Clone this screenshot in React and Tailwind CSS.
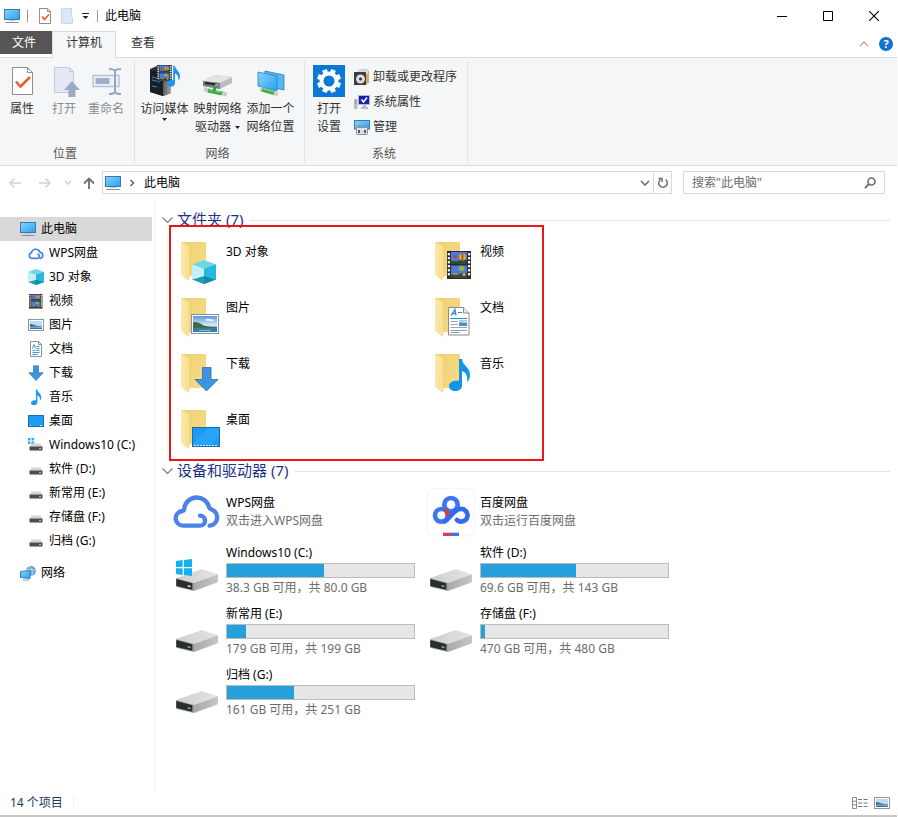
import React from 'react';

/* ---------- small shared icons (16 x 16) ---------- */

function Icon16({ children, className = 'size-4' }) {
  return (
    <svg viewBox="0 0 16 16" className={`shrink-0 ${className}`} aria-hidden="true">
      {children}
    </svg>
  );
}

function Defs() {
  return (
    <svg className="size-0" aria-hidden="true">
      <defs>
        <linearGradient id="screen" x1="0" y1="0" x2="1" y2="1">
          <stop offset="0" stopColor="#86d4fb" />
          <stop offset="1" stopColor="#2b9ff2" />
        </linearGradient>
        <linearGradient id="folderBack" x1="0" y1="0" x2="1" y2="1">
          <stop offset="0" stopColor="#f0d072" />
          <stop offset="1" stopColor="#f6dc88" />
        </linearGradient>
        <linearGradient id="folderFront" x1="0" y1="0" x2="1" y2="0">
          <stop offset="0" stopColor="#fbe9ae" />
          <stop offset="1" stopColor="#f9dd8b" />
        </linearGradient>
        <linearGradient id="driveTop" x1="0" y1="0" x2="1" y2="0">
          <stop offset="0" stopColor="#cfcfd1" />
          <stop offset="1" stopColor="#e4e4e6" />
        </linearGradient>
        <linearGradient id="driveSide" x1="0" y1="0" x2="1" y2="0">
          <stop offset="0" stopColor="#a9a9ab" />
          <stop offset="1" stopColor="#c6c6c8" />
        </linearGradient>
        <linearGradient id="sky" x1="0" y1="0" x2="0" y2="1">
          <stop offset="0" stopColor="#5c94e0" />
          <stop offset="0.55" stopColor="#d3e8f6" />
          <stop offset="1" stopColor="#6fa3c4" />
        </linearGradient>
        <linearGradient id="tower" x1="0" y1="0" x2="1" y2="0">
          <stop offset="0" stopColor="#5b5b5e" />
          <stop offset="1" stopColor="#a5a5a8" />
        </linearGradient>
      </defs>
    </svg>
  );
}

const Monitor = ({ className }) => (
  <Icon16 className={className}>
    <rect x="0.5" y="1.5" width="15" height="10" fill="url(#screen)" stroke="#3a7ba8" />
    <path d="M5 12.5h6" stroke="#b9c6cf" />
    <path d="M1.5 14.5h13" stroke="#7f8f9b" />
  </Icon16>
);

const CloudSmall = () => (
  <Icon16>
    <path
      d="M10 9.2a2.2 2.2 0 1 1-1.6 4.1H3.8a2.8 2.8 0 0 1-.4-5.5 4.5 4.5 0 0 1 8.7-.4 3 3 0 0 1 .4 5.9"
      fill="none"
      stroke="#4a7fe0"
      strokeWidth="1.7"
      strokeLinecap="round"
    />
  </Icon16>
);

function CubeShape() {
  return (
    <>
      <path d="M12 0 24 4.5 12 9 0 4.5Z" fill="#6fd6e6" />
      <path d="M0 4.5 12 9V24L0 19.5Z" fill="#b9eef5" />
      <path d="M24 4.5 12 9V24l12-4.5Z" fill="#19a9d0" />
      <path d="M0 19.5 12 16l12 3.5L12 24Z" fill="#0c8aa6" opacity="0.85" />
      <path d="M12 9v7L0 19.5V4.5Z" fill="#c3f1f6" opacity="0.9" />
      <path d="M12 9v7l12 3.5v-15Z" fill="#27b9dc" />
    </>
  );
}

const CubeSmall = () => (
  <Icon16>
    <g transform="scale(0.667)">
      <CubeShape />
    </g>
  </Icon16>
);

/* Film strip drawn on a 24 x 28 grid */
function FilmShape() {
  const holes = [2, 6, 10, 14, 18, 22];
  return (
    <>
      <rect width="24" height="28" fill="#2b2b2b" />
      {holes.map((y) => (
        <g key={y} fill="#f2f2f2">
          <rect x="0.8" y={y} width="2.2" height="2.4" />
          <rect x="21" y={y} width="2.2" height="2.4" />
        </g>
      ))}
      <rect x="4" y="1" width="16" height="12" fill="#4a7be0" />
      <rect x="4" y="14.5" width="16" height="12.5" fill="#4a7be0" />
      <path d="M4 10.500c3-2 5 1 8-1s5 1 8-1v4.500H4Z" fill="#2b4f2f" />
      <path d="M4 24c3-2 6 1 9-1s5 0 7-1v5H4Z" fill="#3b4a2a" />
      <circle cx="15.500" cy="6" r="3.400" fill="#e2ab2c" />
      <path d="M15.500 2.600v6.800" stroke="#b4372f" strokeWidth="1.400" />
      <circle cx="8" cy="6" r="1.800" fill="#c83c34" />
      <circle cx="14.500" cy="17.500" r="2.800" fill="#8bb83c" />
      <path d="M6 23h4" stroke="#e9842b" strokeWidth="1.600" />
      <circle cx="17" cy="23.500" r="1.500" fill="#e9b02b" />
    </>
  );
}

const FilmSmall = () => (
  <Icon16>
    <g transform="translate(1 1) scale(0.56 0.52)">
      <FilmShape />
    </g>
  </Icon16>
);

/* Landscape photo drawn on a 28 x 20 grid */
function PhotoShape() {
  return (
    <>
      <rect x="0.5" y="0.5" width="27" height="19" fill="#fff" stroke="#7e93a6" />
      <rect x="2" y="2" width="24" height="16" fill="url(#sky)" />
      <path d="M2 8.500c3-1 6 0 9 2s6 2 15 2.500v1H2Z" fill="#3f6b4b" />
      <path d="M2 14h24v4H2Z" fill="#3c7ba3" />
      <path d="M8 16.500h12" stroke="#9fc7dc" strokeWidth="0.800" />
      <path d="M14 6c2-2 4-1 5-1s3 0 4 1-4 2-9 0Z" fill="#fff" opacity="0.800" />
    </>
  );
}

const PhotoSmall = ({ className }) => (
  <Icon16 className={className}>
    <rect x="0.5" y="2.5" width="15" height="11" fill="#fff" stroke="#8797a6" />
    <rect x="2" y="4" width="12" height="8" fill="#b9dcf2" />
    <path d="M2 7c3 0 5 2 12 2.5V12H2Z" fill="#3c6f8e" />
    <path d="M2 10.5c4-1 8 0 12 0" stroke="#8ebdd8" fill="none" />
  </Icon16>
);

const DocSmall = () => (
  <Icon16>
    <path d="M2.500.5h8l3 3v12h-11Z" fill="#fff" stroke="#8a9299" />
    <path d="M10.500.5v3h3" fill="none" stroke="#8a9299" />
    <path d="M4.500 7.500 6 3.500l1.500 4M8.500 5.500h3M4.500 9.500h3M8.500 7.500h3M8.500 9.500h3M4.500 11.500h7M4.500 13.500h5" fill="none" stroke="#3b9ad2" />
  </Icon16>
);

const ArrowSmall = () => (
  <Icon16>
    <path d="M5.500.8h5v7h4.700L8 15.500.8 7.800h4.700Z" fill="#3f93dc" stroke="#2c76b8" strokeWidth="0.7" />
  </Icon16>
);

/* Eighth note drawn on a 21 x 33 grid */
const NOTE = 'M10 1h3c0 6 8 8 8 16 0 3-1 5-3 7 1-7-1-9-5-11v14c0 4-3 6-7 6-3 0-6-2-6-5 0-4 5-6 10-5Z';

const NoteSmall = () => (
  <Icon16>
    <path d={NOTE} transform="translate(3 0) scale(0.49)" fill="#1d9bea" />
  </Icon16>
);

const DesktopSmall = () => (
  <Icon16>
    <rect x="0.5" y="2.500" width="15" height="11" fill="#1f9cf3" stroke="#1a6fae" />
    <path d="M2 12.500h1M12 12.500h2" stroke="#d8f0ff" />
  </Icon16>
);

const DriveSmall = ({ windows }) => (
  <Icon16>
    {windows && (
      <path d="M0 1h2.500v2.500H0ZM3.500 1H6v2.500H3.500ZM0 4.500h2.500V7H0ZM3.500 4.500H6V7H3.500Z" fill="#29b3e6" />
    )}
    <path d="M4 6.500h8.500l2 3h-13Z" fill="#d2d3d4" />
    <rect x="1.500" y="9.500" width="13" height="4" fill="#4a4d4e" />
    <rect x="11" y="11" width="2" height="1" fill="#8fe39a" />
  </Icon16>
);

const NetworkSmall = () => (
  <Icon16>
    <circle cx="11" cy="6" r="5" fill="#6aa5cb" />
    <path d="M9 1.500c3 2 4 5 3 9M6.500 5c3-1 6-1 9 1" stroke="#c4e0f0" fill="none" />
    <path d="M.5 6.500 10 5.500v8l-9.500-1Z" fill="url(#screen)" stroke="#2e7fb5" />
    <path d="M3 15h6" stroke="#7fa6bd" />
  </Icon16>
);

/* ---------- ribbon icons (32 x 32) ---------- */

function Icon32({ children }) {
  return (
    <svg viewBox="0 0 32 32" className="size-8 shrink-0" aria-hidden="true">
      {children}
    </svg>
  );
}

const PropertiesIcon = () => (
  <Icon32>
    <path d="M6.500 2.500h15l5 5v22h-20Z" fill="#fff" stroke="#8e8e8e" />
    <path d="M21.500 2.500v5h5" fill="none" stroke="#8e8e8e" />
    <path d="m10 16.500 4.500 5L24 12" fill="none" stroke="#e5612a" strokeWidth="2.600" />
  </Icon32>
);

const OpenIcon = () => (
  <Icon32>
    <path d="M6.500 2.500h15l4 4v21h-19Z" fill="#e3eaf5" stroke="#c0cbdc" />
    <path d="M21.500 2.500v4h4" fill="none" stroke="#c0cbdc" />
    <path d="m24 16 8 9h-4.500v7h-7v-7H16Z" fill="#9babc6" />
  </Icon32>
);

const RenameIcon = () => (
  <Icon32>
    <rect x="3" y="10.500" width="26" height="11" fill="#eef1f6" stroke="#b7c3d8" strokeWidth="1.500" />
    <rect x="5.500" y="13" width="14" height="6" fill="#9fafc9" />
    <path d="M19 4c3 0 5 0 6 2 1-2 3-2 6-2M19 29c3 0 5 0 6-2 1 2 3 2 6 2M25 5v23" fill="none" stroke="#97a5be" strokeWidth="2" />
  </Icon32>
);

const MediaIcon = () => (
  <Icon32>
    <path d="M1 4 8 1l14 3v24l-8 3-13-4Z" fill="#2e2f33" />
    <path d="m14 8 8-3v23l-8 3Z" fill="url(#tower)" />
    <path d="M1 5 14 8v23L1 27Z" fill="#1d1e22" />
    <path d="m3 12 8 2M3 15l8 2M3 21l5 1" stroke="#2c86d6" strokeWidth="1.200" />
    <g transform="translate(8 0) scale(0.62 0.58)">
      <FilmShape />
    </g>
    <path d={NOTE} transform="translate(18 0) scale(0.62 0.66)" fill="#2196e8" />
  </Icon32>
);

const MapDriveIcon = () => (
  <Icon32>
    <path d="M1 16 12 10l18 2v6l-12 6-17-3Z" fill="#bdbdbf" />
    <path d="M1 16 12 10l18 2-12 6Z" fill="#e3e3e4" />
    <path d="m1 16 17 2v6L1 21Z" fill="#7b7d7e" />
    <path d="m3 18 12 1.500" stroke="#222" strokeWidth="2" />
    <rect x="13" y="19" width="3" height="1.500" fill="#7be08d" />
    <path d="m2 24 6 2M20 28l5 1.500" stroke="#c9cdc9" strokeWidth="4" />
    <path d="m6 25.500 14 3" stroke="#3fae49" strokeWidth="4" />
    <path d="m7 24.500 12 2.500" stroke="#8ddc8b" strokeWidth="1.200" />
    <path d="m13 22-1 4" stroke="#38983f" strokeWidth="3" />
  </Icon32>
);

const AddLocationIcon = () => (
  <Icon32>
    <path d="m10 6 19 4v15l-19-4Z" fill="#54b5f3" stroke="#2c7fba" strokeWidth="0.800" />
    <path d="m3 7 19 4v15L3 21Z" fill="url(#screen)" stroke="#2c7fba" strokeWidth="0.800" />
    <path d="m5 24 4 1M18 28l5 1.500" stroke="#cfd4cf" strokeWidth="4" />
    <path d="m7 24.500 12 3.500" stroke="#3fae49" strokeWidth="4" />
    <path d="m8 23.700 10 2.800" stroke="#8ddc8b" strokeWidth="1.200" />
  </Icon32>
);

const GearIcon = () => (
  <Icon32>
    <rect width="32" height="32" fill="#0a78d6" />
    <g stroke="#fff" strokeWidth="5">
      <path d="M12.900 8.500 11.400 4.900M19.100 8.500l1.500-3.600M8.500 12.900 4.900 11.400M23.500 12.900l3.600-1.500M8.500 19.100l-3.600 1.500M23.500 19.100l3.600 1.500M12.900 23.500l-1.500 3.600M19.100 23.500l1.500 3.600" />
    </g>
    <circle cx="16" cy="16" r="7.500" fill="#0a78d6" stroke="#fff" strokeWidth="4" />
  </Icon32>
);

const UninstallIcon = () => (
  <Icon16>
    <path d="m4 1 7-1 4 2v12l-4 2Z" fill="#d9a46c" />
    <path d="m5 1 9-1v5H5Z" fill="#d8dadb" />
    <rect y="3" width="12" height="13" fill="#3b3d40" />
    <circle cx="6.500" cy="10" r="4.500" fill="#d7dde1" />
    <circle cx="6.500" cy="10" r="1.500" fill="#2d2f31" />
  </Icon16>
);

const SystemIcon = () => (
  <Icon16>
    <rect y="5" width="3.500" height="10" fill="#b9bdc0" />
    <path d="M1 7h1.500M1 9h1.500" stroke="#55a04f" />
    <rect x="4.500" y="1.500" width="11" height="9" fill="#1420b4" stroke="#b5b9cf" />
    <path d="m7.500 5.500 2 2.500 3.500-4.500" fill="none" stroke="#fff" strokeWidth="1.500" />
    <path d="M9 11h3v2h2v2H7v-2h2Z" fill="#b8bcc0" />
  </Icon16>
);

const ManageIcon = () => (
  <Icon16>
    <rect x="0.500" y="1.500" width="15" height="8.500" fill="url(#screen)" stroke="#2c7fba" />
    <path d="M5 8.500V6.500h6v2" fill="none" stroke="#8c9299" strokeWidth="1.200" />
    <rect x="2.500" y="8.500" width="11" height="7" rx="1" fill="#dfe2e4" stroke="#898f94" />
    <path d="M5 11v3M11 11v3" stroke="#33383c" strokeWidth="1.600" />
  </Icon16>
);

/* ---------- large content icons (54 x 56) ---------- */

function LargeIcon({ viewBox = '0 0 54 56', children }) {
  return (
    <svg viewBox={viewBox} className="h-14 w-[54px] shrink-0" aria-hidden="true">
      {children}
    </svg>
  );
}

function FolderIcon({ children }) {
  return (
    <LargeIcon>
      <path d="M9 5h25v34H17Z" fill="url(#folderBack)" />
      <path d="M9 5 18 9.500V39l-1.500 5L9 38Z" fill="url(#folderFront)" />
      <path d="M18 9.500V39" stroke="#e9c768" strokeWidth="0.700" />
      {children}
    </LargeIcon>
  );
}

const folderOverlays = {
  cube: (
    <g transform="translate(20 23)">
      <CubeShape />
    </g>
  ),
  film: (
    <g transform="translate(21 14)">
      <FilmShape />
    </g>
  ),
  photo: (
    <g transform="translate(19 21)">
      <PhotoShape />
    </g>
  ),
  doc: (
    <g transform="translate(22 14)">
      <path d="M.5.5h15l5.500 5.500v22H.5Z" fill="#fff" stroke="#858d94" />
      <path d="M15.500.5v5.500H21" fill="#e8ecef" stroke="#858d94" />
      <path d="m3 8.500 4-6 1 6M4.500 6.500h3" fill="none" stroke="#2c8ccc" strokeWidth="1.300" />
      <path d="M10 5.500h4M2.500 11.500H19" stroke="#2c8ccc" strokeWidth="1.200" />
      <path d="M2.500 14.500h7M2.500 17.500h7M2.500 20.500H19M2.500 23.500H19M2.500 25.500h9" stroke="#9aa3aa" />
      <rect x="11" y="13.500" width="8" height="5.500" fill="#4f8fc0" />
      <path d="M11 14h8v2c-3 0-5-1-8 0Z" fill="#b9dcf0" />
    </g>
  ),
  arrow: <path d="M30.500 18.500h8.500v12h7L34.500 42 23 30.500h7.500Z" fill="#3c94e2" stroke="#2a6ea8" strokeWidth="0.800" />,
  note: <path d={NOTE} transform="translate(23 9)" fill="#1295e6" />,
  desktop: (
    <g transform="translate(20 22)">
      <rect x="0.500" y="0.500" width="27" height="19" fill="#199bf4" stroke="#1c6ca6" />
      <path d="M1 17 17 1h10v9L18 18H1Z" fill="#37b0fb" opacity="0.500" />
      <path d="M2 18.500h24" stroke="#d7efff" strokeDasharray="2 1" />
    </g>
  ),
};

const WpsIcon = () => (
  <LargeIcon viewBox="39 84 162 168">
    <path
      d="M123 167a15 15 0 1 1 0 30H73a22 22 0 0 1-2-44c5-1 5-5 5-10a38 38 0 0 1 74-2c1 5 4 6 9 8a25 25 0 0 1-7 48"
      fill="none"
      stroke="#4a82ea"
      strokeWidth="13"
      strokeLinecap="round"
      strokeLinejoin="round"
    />
  </LargeIcon>
);

const BaiduIcon = () => (
  <LargeIcon viewBox="21 84 162 168">
    <rect x="25" y="86" width="142" height="142" rx="22" fill="#fff" stroke="#f3f4f5" strokeWidth="3" />
    <circle cx="96" cy="134" r="20" fill="none" stroke="#3e74f0" strokeWidth="14" />
    <circle cx="67" cy="166" r="19" fill="none" stroke="#3e74f0" strokeWidth="14" />
    <path d="M78 184C92 176 102 150 124 147a19 19 0 1 1-10 33" fill="none" stroke="#3469ee" strokeWidth="14" strokeLinecap="round" />
    <path d="m76 143 18 14-11 15-5-12Z" fill="#dd3b3b" />
    <path d="M72 218h24v10H72Z" fill="#d83c50" />
    <path d="M96 218h24v10H96Z" fill="#3f76e6" />
  </LargeIcon>
);

const DriveIcon = ({ windows }) => (
  <LargeIcon viewBox="39 252 162 168">
    <path d="M51 354 122 329q4-2 8-1l47 15-72 27Z" fill="url(#driveTop)" />
    <path d="m105 369 72-26v21q0 3-4 4l-68 25Z" fill="url(#driveSide)" />
    <path d="m51 354 54 15v24l-51-12q-3-1-3-4Z" fill="#9b9b9d" />
    <path d="m52 357 48 13v19l-48-11Z" fill="#2b2c2d" />
    <path d="m86 375 9 2v5l-9-2Z" fill={windows ? '#d8dcd9' : '#55c462'} />
    {windows && (
      <path d="m51 303 20-3v21H51Zm24-3 24-3v24H75ZM51 325h20v20l-20-3Zm24 0h24v23l-24-3Z" fill="#14b2ee" />
    )}
  </LargeIcon>
);

/* ---------- data ---------- */

const navItems = [
  { label: 'WPS网盘', icon: <CloudSmall /> },
  { label: '3D 对象', icon: <CubeSmall /> },
  { label: '视频', icon: <FilmSmall /> },
  { label: '图片', icon: <PhotoSmall /> },
  { label: '文档', icon: <DocSmall /> },
  { label: '下载', icon: <ArrowSmall /> },
  { label: '音乐', icon: <NoteSmall /> },
  { label: '桌面', icon: <DesktopSmall /> },
  { label: 'Windows10 (C:)', icon: <DriveSmall windows /> },
  { label: '软件 (D:)', icon: <DriveSmall /> },
  { label: '新常用 (E:)', icon: <DriveSmall /> },
  { label: '存储盘 (F:)', icon: <DriveSmall /> },
  { label: '归档 (G:)', icon: <DriveSmall /> },
];

const folders = [
  { label: '3D 对象', overlay: 'cube' },
  { label: '视频', overlay: 'film' },
  { label: '图片', overlay: 'photo' },
  { label: '文档', overlay: 'doc' },
  { label: '下载', overlay: 'arrow' },
  { label: '音乐', overlay: 'note' },
  { label: '桌面', overlay: 'desktop' },
];

const apps = [
  { label: 'WPS网盘', hint: '双击进入WPS网盘', icon: <WpsIcon /> },
  { label: '百度网盘', hint: '双击运行百度网盘', icon: <BaiduIcon /> },
];

const drives = [
  { label: 'Windows10 (C:)', free: '38.3 GB 可用，共 80.0 GB', used: 52, windows: true },
  { label: '软件 (D:)', free: '69.6 GB 可用，共 143 GB', used: 51 },
  { label: '新常用 (E:)', free: '179 GB 可用，共 199 GB', used: 10 },
  { label: '存储盘 (F:)', free: '470 GB 可用，共 480 GB', used: 2 },
  { label: '归档 (G:)', free: '161 GB 可用，共 251 GB', used: 36 },
];

/* ---------- layout parts ---------- */

function TitleBar() {
  return (
    <header className="flex h-[31px] items-center pl-1">
      <Monitor />
      <span className="ml-[7px] h-3 w-px bg-[#9a9a9a]" />
      <button aria-label="属性" className="ml-[10px]">
        <svg viewBox="0 0 14 16" className="h-4 w-3.5">
          <path d="M1.500.5h8l3 3v12h-11Z" fill="#fff" stroke="#8e8e8e" />
          <path d="M9.500.5v3h3" fill="none" stroke="#8e8e8e" />
          <path d="m4 8.500 2.500 3 4.500-5" fill="none" stroke="#e5612a" strokeWidth="1.700" />
        </svg>
      </button>
      <button aria-label="新建文件夹" className="ml-2">
        <svg viewBox="0 0 14 16" className="h-4 w-3.5">
          <path d="M1.500.5h10v8l1 1v6h-11Z" fill="#dde6f5" stroke="#c9d4e8" />
        </svg>
      </button>
      <button aria-label="自定义快速访问工具栏" className="ml-[7px]">
        <svg viewBox="0 0 9 8" className="h-2 w-[9px]">
          <path d="M1 1.500h7" stroke="#222" />
          <path d="M1.500 4h6l-3 3Z" fill="#222" />
        </svg>
      </button>
      <span className="ml-[7px] h-3 w-px bg-[#9a9a9a]" />
      <h1 className="ml-[7px] text-black">此电脑</h1>
      <div className="ml-auto flex">
        <button aria-label="最小化" className="flex h-[30px] w-[46px] items-center justify-center">
          <svg viewBox="0 0 10 10" className="size-2.5">
            <path d="M0 5.500h10" stroke="#000" />
          </svg>
        </button>
        <button aria-label="最大化" className="flex h-[30px] w-[46px] items-center justify-center">
          <svg viewBox="0 0 10 10" className="size-2.5">
            <path d="M.5.5h9v9h-9Z" fill="none" stroke="#000" />
          </svg>
        </button>
        <button aria-label="关闭" className="flex h-[30px] w-[46px] items-center justify-center">
          <svg viewBox="0 0 10 10" className="size-2.5">
            <path d="m0 0 10 10M10 0 0 10" stroke="#000" strokeWidth="1.100" />
          </svg>
        </button>
      </div>
    </header>
  );
}

function Tabs() {
  return (
    <div className="flex h-[27px] items-start border-b border-[#dadbdc] text-[#333]">
      <button className="h-[23px] w-[52px] bg-[#555] pr-1 text-white">文件</button>
      <button className="h-[27px] w-16 border-x border-t border-[#dadbdc] bg-[#f5f6f7] pb-1">计算机</button>
      <button className="h-6 w-[54px]">查看</button>
      <div className="ml-auto flex h-[26px] items-center gap-2.5 pr-1">
        <button aria-label="折叠功能区">
          <svg viewBox="0 0 10 6" className="h-1.5 w-2.5">
            <path d="m1 5 4-4 4 4" fill="none" stroke="#a8a8a8" strokeWidth="1.300" />
          </svg>
        </button>
        <button aria-label="帮助" className="flex size-3.5 items-center justify-center rounded-full bg-[#1173cc] text-[11px] font-bold text-white">
          ?
        </button>
      </div>
    </div>
  );
}

const Caret = () => (
  <svg viewBox="0 0 5 3" className="h-[3px] w-[5px]" aria-hidden="true">
    <path d="M0 0h5L2.500 3Z" fill="#222" />
  </svg>
);

function RibbonButton({ icon, lines, wide, disabled, caret }) {
  return (
    <button
      disabled={disabled}
      className={`flex shrink-0 flex-col items-center gap-[3px] self-start whitespace-nowrap ${wide ? 'w-[53px]' : 'w-[42px]'} ${
        disabled ? 'text-[#8b8d90]' : 'text-[#333]'
      }`}
    >
      {icon}
      <span className="flex flex-col items-center">
        {lines.map((line, i) => (
          <span key={line} className="flex items-center gap-1 leading-[18px]">
            {line}
            {caret === 'inline' && i === lines.length - 1 && <Caret />}
          </span>
        ))}
        {caret === 'below' && <Caret />}
      </span>
    </button>
  );
}

function RibbonGroup({ label, className, children }) {
  return (
    <section aria-label={label} className={`flex flex-col border-r border-[#e2e3e4] ${className}`}>
      <div className="flex flex-1 pt-1">{children}</div>
      <div className="pr-1 text-center leading-[18px] text-[#555]">{label}</div>
    </section>
  );
}

function Ribbon() {
  const small = [
    { label: '卸载或更改程序', icon: <UninstallIcon /> },
    { label: '系统属性', icon: <SystemIcon /> },
    { label: '管理', icon: <ManageIcon /> },
  ];
  return (
    <div className="flex h-[108px] border-b border-[#dadbdc] bg-[#f5f6f7] pt-[3px] pb-0.5">
      <RibbonGroup label="位置" className="w-[135px] px-px">
        <RibbonButton icon={<PropertiesIcon />} lines={['属性']} />
        <RibbonButton icon={<OpenIcon />} lines={['打开']} disabled />
        <RibbonButton icon={<RenameIcon />} lines={['重命名']} disabled />
      </RibbonGroup>
      <RibbonGroup label="网络" className="w-[170px] px-[3px]">
        <RibbonButton wide icon={<MediaIcon />} lines={['访问媒体']} caret="below" />
        <RibbonButton wide icon={<MapDriveIcon />} lines={['映射网络', '驱动器']} caret="inline" />
        <RibbonButton wide icon={<AddLocationIcon />} lines={['添加一个', '网络位置']} />
      </RibbonGroup>
      <RibbonGroup label="系统" className="w-[163px] px-[3px]">
        <RibbonButton icon={<GearIcon />} lines={['打开', '设置']} />
        <ul className="-mt-px ml-1 text-[#333]">
          {small.map((item) => (
            <li key={item.label}>
              <button className="flex h-[25px] items-center gap-[3px] whitespace-nowrap">
                {item.icon}
                {item.label}
              </button>
            </li>
          ))}
        </ul>
      </RibbonGroup>
    </div>
  );
}

function AddressBar() {
  return (
    <div className="flex h-[34px] items-center pr-3 pb-px pl-2">
      <button aria-label="后退">
        <svg viewBox="0 0 14 12" className="h-3 w-3.5">
          <path d="M13 6H2M6.500 1.500 2 6l4.500 4.500" fill="none" stroke="#d2d2d2" strokeWidth="1.500" />
        </svg>
      </button>
      <button aria-label="前进" className="ml-4">
        <svg viewBox="0 0 14 12" className="h-3 w-3.5">
          <path d="M1 6h11M7.500 1.500 12 6l-4.500 4.500" fill="none" stroke="#d2d2d2" strokeWidth="1.500" />
        </svg>
      </button>
      <button aria-label="最近的位置" className="ml-3">
        <svg viewBox="0 0 8 6" className="h-1.5 w-2">
          <path d="m1 1 3 3 3-3" fill="none" stroke="#cfcfcf" strokeWidth="1.500" />
        </svg>
      </button>
      <button aria-label="上移" className="ml-[11px]">
        <svg viewBox="0 0 12 12" className="size-3">
          <path d="M6 12V1.500M1 6.500l5-5 5 5" fill="none" stroke="#6e6e6e" strokeWidth="1.800" />
        </svg>
      </button>
      <div className="ml-[7px] flex h-[23px] flex-1 items-center border border-[#d9d9d9]">
        <Monitor className="ml-0.5 size-4" />
        <svg viewBox="0 0 6 8" className="ml-2 h-2 w-1.5" aria-hidden="true">
          <path d="m1.500 1 3 3-3 3" fill="none" stroke="#5c5c5c" strokeWidth="1.400" />
        </svg>
        <a href="#this-pc" className="ml-[9px] text-black">此电脑</a>
        <button aria-label="历史记录" className="ml-auto pr-[3px]">
          <svg viewBox="0 0 10 6" className="h-1.5 w-2.5">
            <path d="m1 1 4 4 4-4" fill="none" stroke="#6e6e6e" strokeWidth="1.600" />
          </svg>
        </button>
        <button aria-label="刷新" className="flex h-full w-[18px] items-center justify-center border-l border-[#d9d9d9]">
          <svg viewBox="0 0 12 12" className="size-3">
            <path d="M8.500 2.500a4.300 4.300 0 1 1-5 0M1.500 1.500h3.500V5" fill="none" stroke="#6e6e6e" strokeWidth="1.500" />
          </svg>
        </button>
      </div>
      <label className="ml-[11px] flex h-[23px] w-[202px] items-center border border-[#d9d9d9] px-2">
        <input aria-label="搜索此电脑" placeholder={'搜索"此电脑"'} className="min-w-0 flex-1 outline-none placeholder:text-[#6d6d6d]" />
        <svg viewBox="0 0 12 12" className="size-3" aria-hidden="true">
          <circle cx="7.500" cy="4.500" r="3.500" fill="none" stroke="#6e6e6e" strokeWidth="1.600" />
          <path d="M5 7 .8 11.200" stroke="#6e6e6e" strokeWidth="1.800" />
        </svg>
      </label>
    </div>
  );
}

function Sidebar() {
  return (
    <nav aria-label="导航" className="w-[155px] shrink-0 border-r border-[#f3f3f3] pt-[17px] pr-0.5 text-black">
      <a href="#this-pc" aria-current="page" className="flex h-6 items-center gap-[5px] bg-[#d9d9d9] pl-5">
        <Monitor />
        此电脑
      </a>
      {navItems.map((item) => (
        <a key={item.label} href="#item" className="flex h-6 items-center gap-[5px] pl-7 whitespace-nowrap">
          {item.icon}
          {item.label}
        </a>
      ))}
      <a href="#network" className="mt-2 flex h-6 items-center gap-[5px] pl-5">
        <NetworkSmall />
        网络
      </a>
    </nav>
  );
}

function SectionHeading({ children }) {
  return (
    <h2 className="flex h-5 items-center text-[15px] leading-[18px] text-[#1e3287]">
      <svg viewBox="0 0 11 7" className="mr-1 h-[7px] w-[11px]" aria-hidden="true">
        <path d="m.5.5 5 5 5-5" fill="none" stroke="#7b7b7b" strokeWidth="1.200" />
      </svg>
      <span className="pb-0.5">{children}</span>
      <span className="ml-[7px] h-px flex-1 bg-[#e2e2e2]" />
    </h2>
  );
}

function Content() {
  return (
    <main className="min-w-0 flex-1 px-[7px] pt-2.5">
      <section className="relative">
        <SectionHeading>文件夹 (7)</SectionHeading>
        <ul className="grid grid-cols-[repeat(auto-fill,254px)] pt-[7px] pl-2.5">
          {folders.map((folder) => (
            <li key={folder.label} className="flex h-14">
              <FolderIcon>{folderOverlays[folder.overlay]}</FolderIcon>
              <span className="pt-1.5 leading-[18px] text-black">{folder.label}</span>
            </li>
          ))}
        </ul>
        {/* highlight drawn over the folder area */}
        <div className="pointer-events-none absolute top-[15px] bottom-0 left-[7px] w-[375px] border-2 border-[#ee1515]" />
      </section>
      <section>
        <SectionHeading>设备和驱动器 (7)</SectionHeading>
        <ul className="grid grid-cols-[repeat(auto-fill,254px)] pt-[7px] pl-2.5 leading-[18px]">
          {apps.map((app) => (
            <li key={app.label} className="flex h-14">
              {app.icon}
              <div className="pt-1.5">
                <div className="text-black">{app.label}</div>
                <div className="text-[#6d6d6d]">{app.hint}</div>
              </div>
            </li>
          ))}
          {drives.map((drive) => (
            <li key={drive.label} className="flex h-[61px]">
              <DriveIcon windows={drive.windows} />
              <div className="w-[189px]">
                <div className="text-black">{drive.label}</div>
                <div
                  role="meter"
                  aria-label={drive.label}
                  aria-valuemin={0}
                  aria-valuemax={100}
                  aria-valuenow={drive.used}
                  className="my-px h-[15px] border border-[#bcbcbc] bg-[#e6e6e6]"
                >
                  <div className="h-full bg-[#26a0da]" style={{ width: `${drive.used}%` }} />
                </div>
                <div className="whitespace-nowrap text-[#6d6d6d]">{drive.free}</div>
              </div>
            </li>
          ))}
        </ul>
      </section>
    </main>
  );
}

function StatusBar() {
  return (
    <footer className="flex h-[26px] items-center border-b-2 border-[#c6c6c6] pr-[7px] pl-2.5 text-[#1e395b]">
      <span>14 个项目</span>
      <span className="ml-2.5 h-3 w-px bg-[#f0f0f0]" />
      <div className="ml-auto flex items-center gap-1.5">
        <button aria-label="详细信息">
          <svg viewBox="0 0 16 12" className="h-3 w-4">
            <path d="M.5.5h4v11h-4ZM.5 4.200h4M.5 7.800h4" fill="none" stroke="#8a8a8a" />
            <path d="M6 2.500h4M11.500 2.500h4M6 6h4M11.500 6h4M6 9.500h4M11.500 9.500h4" stroke="#777" />
          </svg>
        </button>
        <button aria-label="大图标">
          <PhotoSmall />
        </button>
      </div>
    </footer>
  );
}

export default function App() {
  return (
    <div className="flex min-h-screen flex-col bg-white pr-px text-xs font-['Noto_Sans','Noto_Sans_CJK_SC',sans-serif]">
      <Defs />
      <TitleBar />
      <Tabs />
      <Ribbon />
      <AddressBar />
      <div className="flex flex-1">
        <Sidebar />
        <Content />
      </div>
      <StatusBar />
    </div>
  );
}
